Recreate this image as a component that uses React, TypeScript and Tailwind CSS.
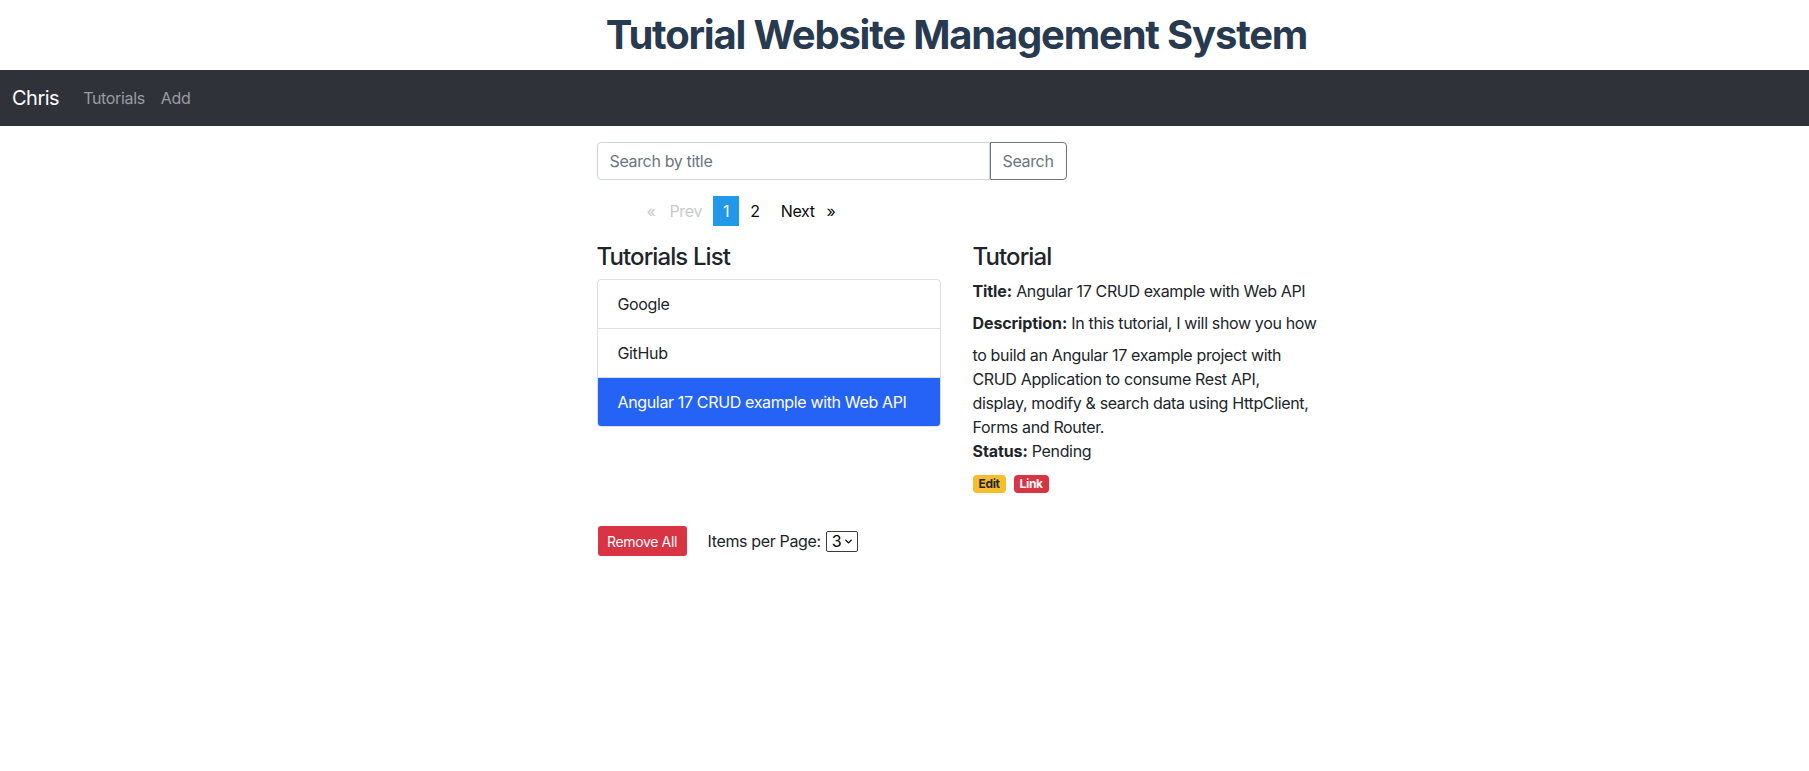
import { ChevronDown } from "lucide-react";

const tutorials = ["Google", "GitHub", "Angular 17 CRUD example with Web API"];

function Pagination() {
  return (
    <ul className="flex gap-[1px] pl-[40px] mb-4 text-[16px] leading-6">
      <li className="px-[10px] py-[3px] text-[#cacaca]">
        <span className="mr-[14px]">«</span>Prev
      </li>
      <li className="px-[10px] py-[3px] bg-[#2199e8] text-[#fefefe]">1</li>
      <li className="px-[10px] py-[3px] text-[#0a0a0a]">2</li>
      <li className="px-[10px] py-[3px] text-[#0a0a0a]">
        Next<span className="ml-[12px]">»</span>
      </li>
    </ul>
  );
}

export default function App() {
  const selected = 2;

  return (
    <div
      className="min-h-screen bg-white text-[#212529] tracking-[-0.35px]"
      style={{ fontFamily: "Inter, 'Noto Sans', sans-serif" }}
    >
      {/* Header */}
      <div className="h-[70px] flex items-center justify-center pl-[104px]">
        <h1 className="text-[40px] leading-[48px] font-bold text-[#283a4f] tracking-[-1.2px]">
          Tutorial Website Management System
        </h1>
      </div>

      {/* Navbar */}
      <nav className="h-[56px] bg-[#2f3239] flex items-center pl-[12px]">
        <span className="text-[20px] text-white mr-[16px] tracking-[-0.5px]">Chris</span>
        <span className="text-[16px] text-[#9b9da1] px-2">Tutorials</span>
        <span className="text-[16px] text-[#9b9da1] px-2">Add</span>
      </nav>

      {/* Content */}
      <div className="pl-[116px]">
        <div className="w-[732px] mx-auto pt-4">
          {/* Search */}
          <div className="flex w-[470px] h-[38px] mb-4">
            <div className="flex-1 flex items-center border border-[#ced4da] rounded-l-[4px] px-3 text-[16px] text-[#6c757d]">
              Search by title
            </div>
            <button className="w-[77px] border border-[#6c757d] rounded-r-[4px] text-[16px] text-[#6c757d]">
              Search
            </button>
          </div>

          <Pagination />

          <div className="flex gap-[32px]">
            {/* List */}
            <div className="w-[344px] shrink-0">
              <h4 className="text-[24px] leading-[29px] font-medium mb-2 tracking-[-0.9px]">Tutorials List</h4>
              <ul className="border border-[#dfdfdf] rounded-[4px] overflow-hidden">
                {tutorials.map((t, i) => (
                  <li
                    key={t}
                    className={`px-5 py-3 text-[16px] leading-6 ${
                      i > 0 ? "border-t border-[#dfdfdf]" : ""
                    } ${i === selected ? "bg-[#2563f6] text-white border-[#2563f6]" : ""}`}
                  >
                    {t}
                  </li>
                ))}
              </ul>
            </div>

            {/* Detail */}
            <div className="w-[356px] shrink-0 text-[16px] leading-6">
              <h4 className="text-[24px] leading-[29px] font-medium mb-2 tracking-[-0.9px]">Tutorial</h4>
              <div>
                <label className="inline-block mb-2 font-bold tracking-[-0.1px]">Title:</label> Angular 17 CRUD
                example with Web API
              </div>
              <div>
                <label className="inline-block mb-2 font-bold tracking-[-0.1px]">Description:</label> In this
                tutorial, I will show you how
                <br />
                to build an Angular 17 example project with
                <br />
                CRUD Application to consume Rest API,
                <br />
                display, modify &amp; search data using HttpClient,
                <br />
                Forms and Router.
              </div>
              <div>
                <label className="inline-block mb-2 font-bold tracking-[-0.1px]">Status:</label> Pending
              </div>
              <div className="flex gap-2 mt-[4px]">
                <span className="h-[18px] px-[6px] flex items-center rounded-[4px] bg-[#f8bd2c] text-[#212529] text-[12px] font-bold">
                  Edit
                </span>
                <span className="h-[18px] px-[6px] flex items-center rounded-[4px] bg-[#d93444] text-white text-[12px] font-bold">
                  Link
                </span>
              </div>
            </div>
          </div>

          {/* Footer actions */}
          <div className="flex items-center mt-[33px]">
            <button className="h-[30px] w-[89px] ml-[1px] rounded-[3px] bg-[#d93444] text-white text-[14px]">
              Remove All
            </button>
            <span className="ml-[21px] text-[16px]">Items per Page:</span>
            <div className="ml-[5px] h-[21px] w-[32px] border border-[#3a3a3a] rounded-[2px] flex items-center pl-[5px] gap-[2px] text-[16px] leading-none text-black">
              3
              <ChevronDown size={11} strokeWidth={3} />
            </div>
          </div>
        </div>
      </div>
    </div>
  );
}
